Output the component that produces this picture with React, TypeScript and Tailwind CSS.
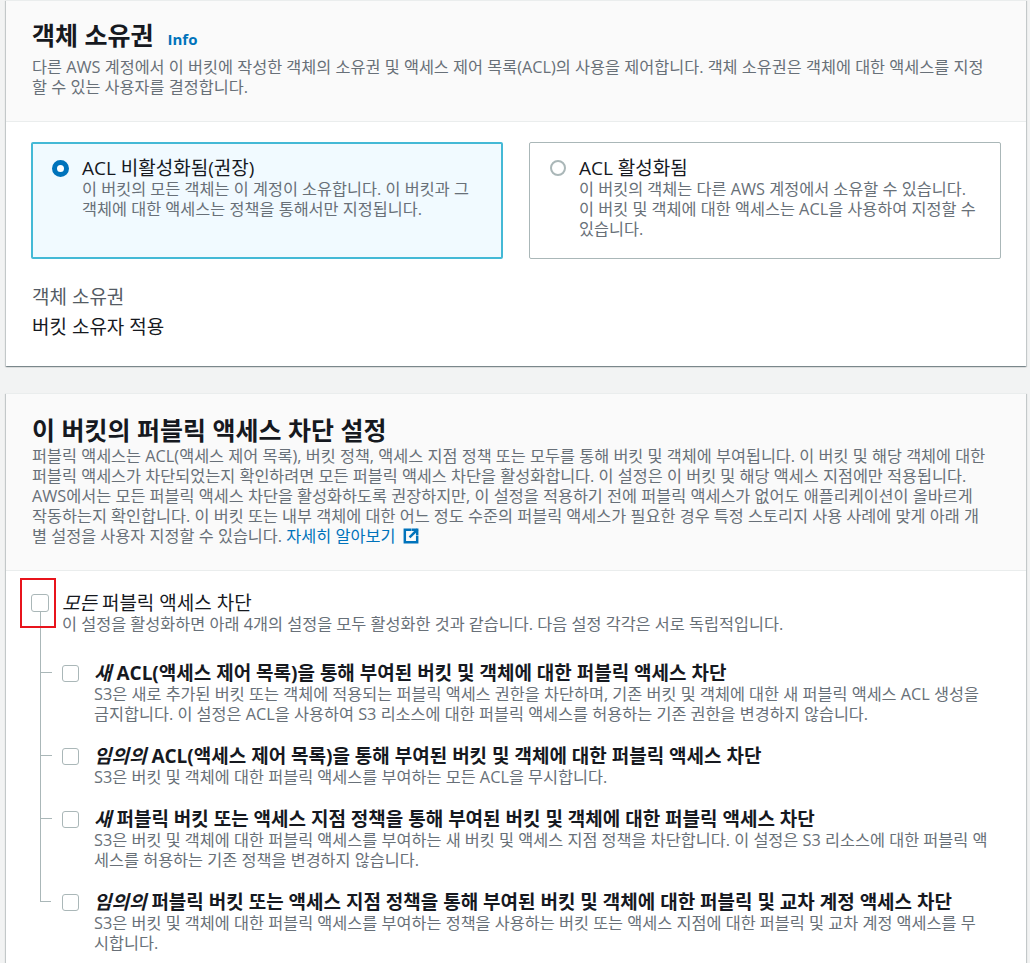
import React from "react";

const C = {
  line: "bg-[#aab7b8]",
};

function Checkbox({ size = 17 }: { size?: number }) {
  return (
    <div
      className={
        size === 18
          ? "h-[18px] w-[18px] shrink-0 rounded-[3px] border border-[#aab7b8] bg-white"
          : "h-[17px] w-[17px] shrink-0 rounded-[3px] border border-[#aab7b8] bg-white"
      }
    />
  );
}

function ExternalIcon() {
  return (
    <svg width="18" height="18" viewBox="0 0 16 16" fill="none" className="inline-block align-[-3px] ml-[7px]">
      <path d="M7 2.5H2.5v11h11V9" stroke="#0073bb" strokeWidth="2.2" strokeLinecap="square" />
      <path d="M9.5 2.5h4v4" stroke="#0073bb" strokeWidth="2.2" strokeLinecap="square" />
      <path d="M13 3L7.5 8.5" stroke="#0073bb" strokeWidth="2.2" strokeLinecap="square" />
    </svg>
  );
}

type Sub = {
  em: string;
  rest: string;
  desc: string[];
  pt: string;
  last?: boolean;
};

const subs: Sub[] = [
  {
    em: "새",
    rest: " ACL(액세스 제어 목록)을 통해 부여된 버킷 및 객체에 대한 퍼블릭 액세스 차단",
    desc: [
      "S3은 새로 추가된 버킷 또는 객체에 적용되는 퍼블릭 액세스 권한을 차단하며, 기존 버킷 및 객체에 대한 새 퍼블릭 액세스 ACL 생성을",
      "금지합니다. 이 설정은 ACL을 사용하여 S3 리소스에 대한 퍼블릭 액세스를 허용하는 기존 권한을 변경하지 않습니다.",
    ],
    pt: "first",
  },
  {
    em: "임의의",
    rest: " ACL(액세스 제어 목록)을 통해 부여된 버킷 및 객체에 대한 퍼블릭 액세스 차단",
    desc: ["S3은 버킷 및 객체에 대한 퍼블릭 액세스를 부여하는 모든 ACL을 무시합니다."],
    pt: "rest",
  },
  {
    em: "새",
    rest: " 퍼블릭 버킷 또는 액세스 지점 정책을 통해 부여된 버킷 및 객체에 대한 퍼블릭 액세스 차단",
    desc: [
      "S3은 버킷 및 객체에 대한 퍼블릭 액세스를 부여하는 새 버킷 및 액세스 지점 정책을 차단합니다. 이 설정은 S3 리소스에 대한 퍼블릭 액",
      "세스를 허용하는 기존 정책을 변경하지 않습니다.",
    ],
    pt: "rest",
  },
  {
    em: "임의의",
    rest: " 퍼블릭 버킷 또는 액세스 지점 정책을 통해 부여된 버킷 및 객체에 대한 퍼블릭 및 교차 계정 액세스 차단",
    desc: [
      "S3은 버킷 및 객체에 대한 퍼블릭 액세스를 부여하는 정책을 사용하는 버킷 또는 액세스 지점에 대한 퍼블릭 및 교차 계정 액세스를 무",
      "시합니다.",
    ],
    pt: "rest",
    last: true,
  },
];

function SubItem({ s }: { s: Sub }) {
  const first = s.pt === "first";
  return (
    <div className="ml-[9px] flex">
      <div className={s.last ? "w-[22px] shrink-0" : "w-[22px] shrink-0 border-l border-[#aab7b8]"}>
        <div
          className={
            (first ? "h-[39px] " : "h-[32px] ") +
            (s.last
              ? "w-[11px] border-l border-b border-[#aab7b8]"
              : "w-[11px] border-b border-[#aab7b8]")
          }
        />
      </div>
      <div className={(first ? "pt-[28px] " : "pt-[21px] ") + "flex gap-[15px]"}>
        <div className="pt-[3px]">
          <Checkbox />
        </div>
        <div>
          <div className="text-[19px] leading-[22px] font-bold text-[#16191f] whitespace-nowrap">
            <i>{s.em}</i>
            {s.rest}
          </div>
          {s.desc.map((d, i) => (
            <div key={i} className="text-[16.3px] leading-[20px] text-[#687078] whitespace-nowrap">
              {d}
            </div>
          ))}
        </div>
      </div>
    </div>
  );
}

export default function App() {
  return (
    <div className="min-h-screen bg-[#f2f3f3] pl-[6px] pr-[4px] pb-[40px] font-['Open_Sans','Noto_Sans_CJK_KR',sans-serif] text-[#16191f]">
      {/* Card 1 */}
      <div className="bg-white border-t border-[#eaeded] shadow-[0_1px_1px_0_rgba(0,28,36,0.3),1px_1px_1px_0_rgba(0,28,36,0.15),-1px_1px_1px_0_rgba(0,28,36,0.15)]">
        <div className="bg-[#fafafa] border-b border-[#eaeded] pl-[26px] pr-[26px] pt-[19px] pb-[24px]">
          <div className="flex items-baseline">
            <h2 className="text-[25px] leading-[30px] font-bold text-[#16191f]">객체 소유권</h2>
            <span className="ml-[14px] text-[15px] font-bold text-[#0073bb]">Info</span>
          </div>
          <div className="mt-[6px] text-[16.3px] leading-[20px] text-[#687078]">
            <div className="whitespace-nowrap">
              다른 AWS 계정에서 이 버킷에 작성한 객체의 소유권 및 액세스 제어 목록(ACL)의 사용을 제어합니다. 객체 소유권은 객체에 대한 액세스를 지정
            </div>
            <div className="whitespace-nowrap">할 수 있는 사용자를 결정합니다.</div>
          </div>
        </div>
        <div className="pl-[25px] pr-[25px] pt-[20px] pb-[29px]">
          <div className="grid grid-cols-2 gap-[26px]">
            <div className="flex gap-[13px] rounded-[2px] border-2 border-[#44b9d6] bg-[#f1faff] pl-[19px] pr-[18px] pt-[13px] pb-[18px]">
              <div className="mt-[3px] h-[17px] w-[17px] shrink-0 rounded-full border-[5px] border-[#0073bb] bg-white" />
              <div>
                <div className="text-[19px] leading-[22px] text-[#16191f]">ACL 비활성화됨(권장)</div>
                <div className="text-[16.3px] leading-[20px] text-[#687078] whitespace-nowrap">
                  이 버킷의 모든 객체는 이 계정이 소유합니다. 이 버킷과 그
                </div>
                <div className="text-[16.3px] leading-[20px] text-[#687078] whitespace-nowrap">
                  객체에 대한 액세스는 정책을 통해서만 지정됩니다.
                </div>
              </div>
            </div>
            <div className="flex gap-[13px] rounded-[2px] border border-[#aab7b8] bg-white pl-[20px] pr-[19px] pt-[14px] pb-[19px]">
              <div className="mt-[3px] h-[16px] w-[16px] shrink-0 rounded-full border-2 border-[#aab7b8] bg-white" />
              <div>
                <div className="text-[19px] leading-[22px] text-[#16191f]">ACL 활성화됨</div>
                <div className="text-[16.3px] leading-[20px] text-[#687078] whitespace-nowrap">
                  이 버킷의 객체는 다른 AWS 계정에서 소유할 수 있습니다.
                </div>
                <div className="text-[16.3px] leading-[20px] text-[#687078] whitespace-nowrap">
                  이 버킷 및 객체에 대한 액세스는 ACL을 사용하여 지정할 수
                </div>
                <div className="text-[16.3px] leading-[20px] text-[#687078]">있습니다.</div>
              </div>
            </div>
          </div>
          <div className="mt-[28px] pl-[1px] text-[19px] leading-[20px] text-[#545b64]">객체 소유권</div>
          <div className="mt-[10px] pl-[1px] text-[19px] leading-[20px] text-[#16191f]">버킷 소유자 적용</div>
        </div>
      </div>

      {/* Card 2 */}
      <div className="mt-[27px] bg-white border-t border-[#eaeded] shadow-[0_1px_1px_0_rgba(0,28,36,0.3),1px_1px_1px_0_rgba(0,28,36,0.15),-1px_1px_1px_0_rgba(0,28,36,0.15)]">
        <div className="bg-[#fafafa] border-b border-[#eaeded] pl-[26px] pr-[26px] pt-[21px] pb-[24px]">
          <h2 className="text-[25px] leading-[30px] font-bold text-[#16191f]">이 버킷의 퍼블릭 액세스 차단 설정</h2>
          <div className="mt-[1px] text-[16.3px] leading-[20px] text-[#687078]">
            <div className="whitespace-nowrap">
              퍼블릭 액세스는 ACL(액세스 제어 목록), 버킷 정책, 액세스 지점 정책 또는 모두를 통해 버킷 및 객체에 부여됩니다. 이 버킷 및 해당 객체에 대한
            </div>
            <div className="whitespace-nowrap">
              퍼블릭 액세스가 차단되었는지 확인하려면 모든 퍼블릭 액세스 차단을 활성화합니다. 이 설정은 이 버킷 및 해당 액세스 지점에만 적용됩니다.
            </div>
            <div className="whitespace-nowrap">
              AWS에서는 모든 퍼블릭 액세스 차단을 활성화하도록 권장하지만, 이 설정을 적용하기 전에 퍼블릭 액세스가 없어도 애플리케이션이 올바르게
            </div>
            <div className="whitespace-nowrap">
              작동하는지 확인합니다. 이 버킷 또는 내부 객체에 대한 어느 정도 수준의 퍼블릭 액세스가 필요한 경우 특정 스토리지 사용 사례에 맞게 아래 개
            </div>
            <div className="whitespace-nowrap">
              별 설정을 사용자 지정할 수 있습니다.{" "}
              <a className="text-[#0073bb]" href="#">
                자세히 알아보기
                <ExternalIcon />
              </a>
            </div>
          </div>
        </div>
        <div className="pl-[25px] pr-[25px] pt-[21px] pb-[20px]">
          <div className="flex gap-[13px]">
            <div className="flex w-[18px] shrink-0 flex-col">
              <div className="relative mt-[2px]">
                <Checkbox size={18} />
                <div className="pointer-events-none absolute left-[-11px] top-[-16px] h-[50px] w-[36px] border-2 border-[#e8141c]" />
              </div>
              <div className={"ml-[9px] w-px flex-1 " + C.line} />
            </div>
            <div>
              <div className="text-[19px] leading-[22px] text-[#16191f]">
                <i>모든</i> 퍼블릭 액세스 차단
              </div>
              <div className="text-[16.3px] leading-[20px] text-[#687078] whitespace-nowrap">
                이 설정을 활성화하면 아래 4개의 설정을 모두 활성화한 것과 같습니다. 다음 설정 각각은 서로 독립적입니다.
              </div>
            </div>
          </div>
          {subs.map((s, i) => (
            <SubItem key={i} s={s} />
          ))}
        </div>
      </div>
    </div>
  );
}
